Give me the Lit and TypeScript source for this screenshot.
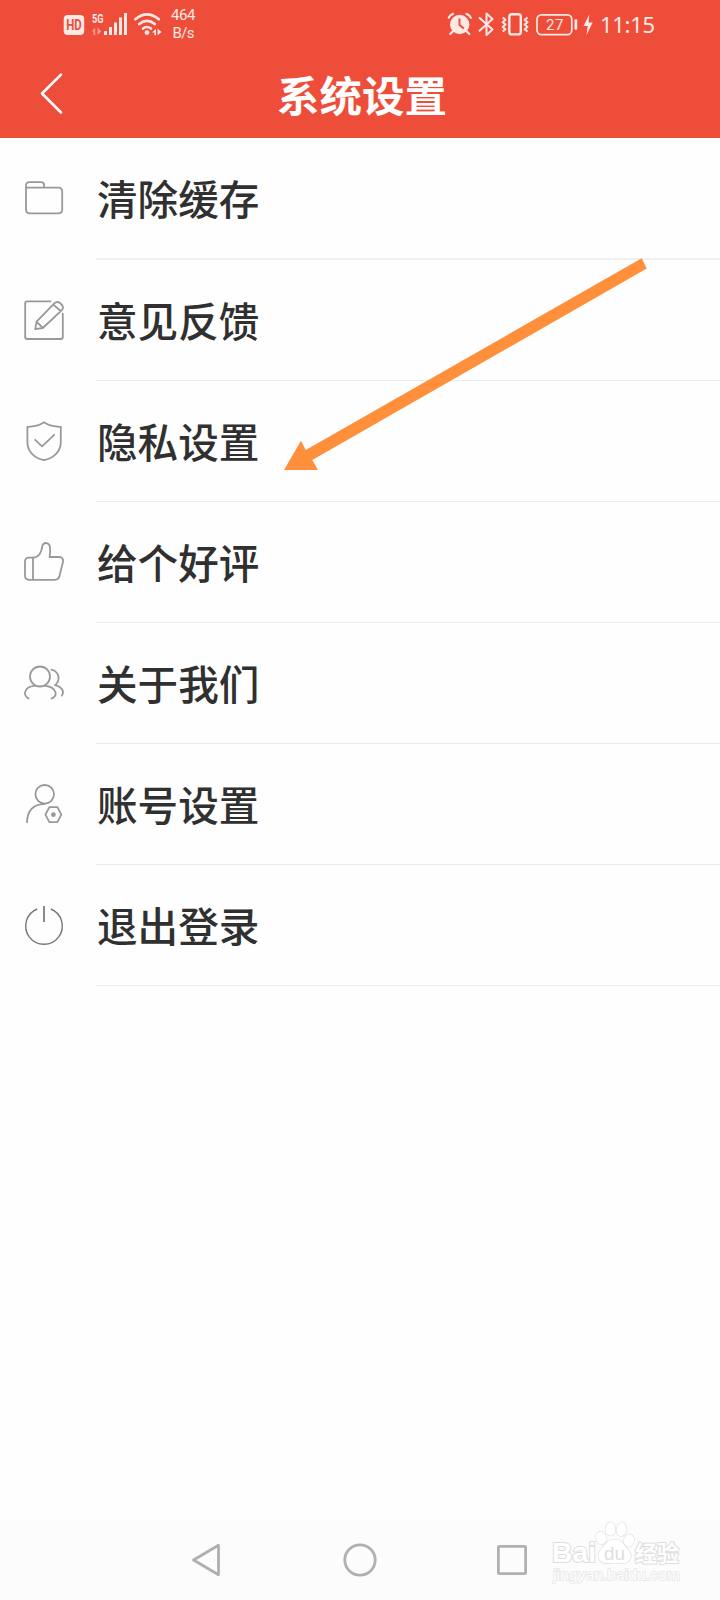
import { LitElement, html, svg, css } from "lit";
import { customElement, property } from "lit/decorators.js";

const icons: Record<string, unknown> = {
  folder: svg`<path d="M2 32V7.5Q2 4.2 5.2 4.2H17.3Q20 4.2 20 6.8V9.6M2 9.6H34.3Q38.2 9.6 38.2 13.5V31.6Q38.2 35.4 34.3 35.4H6Q2 35.4 2 31.5"/>`,
  edit: svg`<path d="M26.5 1.3H3Q1.2 1.3 1.2 3V37.3Q1.2 39 3 39H37Q38.8 39 38.8 37.3V13.7"/><path d="M11.2 29.2 12.6 21.6 30.3 3.4Q33 .8 36 3L38 5Q40 7.6 37.8 10.2L18.8 28 11.2 29.2M29.3 4.6 36.8 11M12.6 21.6 18.8 28"/>`,
  shield: svg`<path d="M20 1.3Q13 6 3.4 5.8V21C3.4 31 11 37.5 20 39.2C29 37.5 36.8 31 36.8 21V5.8Q27 6 20 1.3Z"/><path d="M11.2 18.8 18 25.3 30.2 13.8"/>`,
  thumb: svg`<path d="M9 15.6H5Q1 15.6 1 19.6V33.6Q1 37.8 5 37.8H31Q34.4 37.8 35.3 34.6L39 20Q39.6 15 35.3 15H25.6C26.3 11 26.6 8 25.9 4.5C25 .1 19.5-.2 18.3 4C17.5 10 15.5 15.6 9 15.6V37.8"/>`,
  users: svg`<circle cx="16" cy="13.5" r="10"/><path d="M4.6 35.6C1.5 33.5 .7 31.5 1 29.5C1.8 25.5 5.5 23.3 10.5 22.9M21.5 22.9C27 23.5 30.5 26 31.6 29.6C32 32 30.5 34.2 27.6 35.6M27.3 6.7C31.5 7.3 34.6 10.8 34.6 15C34.6 18 33.2 20.5 31 22.2C35.5 23.2 38.8 26 39 29.6Q39 31.2 37.8 32.6"/>`,
  account: svg`<circle cx="20.7" cy="10.3" r="9.3"/><path d="M3 38.3C3.3 27 9 20.2 20.7 19.8M25.4 23.1H33.4L37.3 30.7 33.4 38.2H25.4L21.4 30.7Z"/><circle cx="29.4" cy="30.7" r="2.4" fill="#999" stroke="none"/>`,
  power: svg`<g stroke="#777" stroke-width="1.4" stroke-linecap="butt"><path d="M13.2 4A18.3 18.3 0 1 0 26.8 4"/><path d="M20 1V17" stroke-width="1.7"/></g>`,
};

@customElement("status-bar")
class StatusBar extends LitElement {
  static styles = css`
    :host { display: flex; justify-content: space-between; height: 50px; padding: 0 60px 0 58px; }
    svg { display: block; flex: none; }
    text { font-family: Roboto, "Noto Sans", sans-serif; }
    .time { font-family: "Noto Sans", sans-serif; }
  `;
  render() {
    return html`
      <svg width="142" height="50" viewBox="58 0 142 50" fill="#ffe9e5">
        <rect x="63.7" y="15" width="20.5" height="20" rx="4" />
        <text x="66.3" y="30.2" font-size="14" font-weight="700" textLength="15.5" lengthAdjust="spacingAndGlyphs" fill="#ee4d3a">HD</text>
        <text x="92" y="22.7" font-size="13" font-weight="700" textLength="11.5" lengthAdjust="spacingAndGlyphs">5G</text>
        <path d="M104 31h3v4h-3zM109 27h3v8h-3zM114 22.5h3v12.5h-3zM119 17.5h3v17.5h-3zM124 13h3v22h-3z" />
        <path opacity=".5" d="M92 31.2l3.2-3.7v7.5h-1.7v-3.8zM97.5 27.5v7.5l3.8-3.8z" />
        <g fill="none" stroke="#ffe9e5" stroke-width="2.6" stroke-linecap="round">
          <path d="M135.3 19.2Q147 9.5 158.8 19.2M139.2 24.1Q147 17.8 154.8 24.1M143 28.6Q147 25.4 151 28.6" />
        </g>
        <circle cx="147" cy="32.6" r="2.4" />
        <path d="M152 32.5l4-3.8v6.6h-1.6v-2.8zM157.6 28.7v6.6l4-3.2z" />
        <text x="171" y="20" font-size="15" textLength="24.5">464</text>
        <text x="172.5" y="37.8" font-size="15" textLength="22">B/s</text>
      </svg>
      <svg width="220" height="50" viewBox="440 0 220 50" fill="#ffe9e5">
        <circle cx="459.7" cy="24.5" r="9.7" />
        <path d="M459.5 18.5v6.5l4.3 3.5" fill="none" stroke="#ee4d3a" stroke-width="2" />
        <path d="M448.7 17.7Q450 14.8 453 13.9M466.5 13.9Q469.5 14.8 470.8 17.7M452.7 31.5l-2.5 2.5M466.8 31.5l2.5 2.5" fill="none" stroke="#ffe9e5" stroke-width="2.2" stroke-linecap="round" />
        <g fill="none" stroke="#ffe9e5" stroke-width="2" stroke-linejoin="round">
          <path d="M479 17.5 492.5 29.5 486.5 35V13.5L492.5 19 479 31.2" />
          <rect x="509.3" y="14.2" width="11.5" height="20.2" rx="2.5" stroke-width="2.4" />
          <path d="M502.7 17.5l2.8 2.3-2.8 2.5 2.8 2.3-2.8 2.3 2.8 2.3-2.8 2.3M527.5 17.5l-2.8 2.3 2.8 2.5-2.8 2.3 2.8 2.3-2.8 2.3 2.8 2.3" />
          <rect x="537" y="14.8" width="34.8" height="19.8" rx="4.5" stroke-width="1.7" />
        </g>
        <rect x="574.5" y="19.3" width="2.7" height="10.5" rx="1" />
        <text x="546" y="30" font-size="15" textLength="17.5">27</text>
        <path d="M589.3 14.5 583.5 26h4.2l-1.2 9L592.7 22.6h-4.2z" />
        <text class="time" x="600" y="32.8" font-size="22" textLength="55">11:15</text>
      </svg>`;
  }
}

@customElement("setting-row")
class SettingRow extends LitElement {
  @property() icon = "";
  @property() label = "";
  static styles = css`
    :host { display: grid; grid-template-columns: 96px 1fr; height: 121px; }
    :host([first]) { height: 122px; }
    .glyph { height: 120px; padding-left: 24px; display: flex; align-items: center; }
    .icon { width: 40px; height: 40px; overflow: visible; }
    .label {
      display: flex; align-items: center; padding-left: 1px; border-bottom: 1px solid #ebebeb; color: #303030;
      font: 500 40.6px/1 "KaiTi", "Noto Sans CJK SC", sans-serif; white-space: nowrap;
    }
    :host([first]) .label { border-bottom: 2px solid #efefef; }
  `;
  render() {
    return html`
      <div class="glyph">
        <svg class="icon" viewBox="0 0 40 40" fill="none" stroke="#999" stroke-width="1.8" stroke-linecap="round" stroke-linejoin="round">${icons[this.icon]}</svg>
      </div>
      <div class="label">${this.label}</div>`;
  }
}

@customElement("app-root")
class AppRoot extends LitElement {
  static styles = css`
    :host { display: flex; flex-direction: column; position: relative; width: 720px; height: 1600px; background: #fefefe; overflow: hidden; }
    .top { height: 138px; background: #ee4d3a; display: flex; flex-direction: column; flex: none; }
    .title-bar { display: grid; grid-template-columns: 120px 1fr 116px; align-items: center; height: 88px; }
    .title { text-align: center; color: #fff; font: 600 42.5px/1 "KaiTi", "Noto Sans CJK SC", sans-serif; }
    .back { display: block; margin-left: 38px; }
    .list { flex: 1; }
    .nav { height: 80px; flex: none; background: #fcfcfc; display: flex; align-items: center; justify-content: space-between; padding: 0 190px; }
    .arrow { position: absolute; left: 280px; top: 250px; }
    .mark { position: absolute; left: 545px; top: 1515px; }
  `;
  render() {
    const rows = [
      ["folder", "清除缓存"],
      ["edit", "意见反馈"],
      ["shield", "隐私设置"],
      ["thumb", "给个好评"],
      ["users", "关于我们"],
      ["account", "账号设置"],
      ["power", "退出登录"],
    ];
    return html`
      <div class="top">
        <status-bar></status-bar>
        <div class="title-bar">
          <svg class="back" width="28" height="44" viewBox="0 0 28 44" fill="none" stroke="#fff" stroke-width="2.6" stroke-linecap="round" stroke-linejoin="round"><path d="M23 2.7 4 21.5 23 40.5" /></svg>
          <div class="title">系统设置</div>
        </div>
      </div>
      <div class="list">
        ${rows.map(([icon, label], i) => html`<setting-row icon=${icon} label=${label} ?first=${i === 0}></setting-row>`)}
      </div>
      <div class="nav">
        <svg width="34" height="34" viewBox="0 0 34 34" fill="none" stroke="#b0b0b0" stroke-width="2.8" stroke-linejoin="round"><path d="M3.5 17 28.5 2.2V31.8Z" /></svg>
        <svg width="34" height="34" viewBox="0 0 34 34" fill="none" stroke="#b0b0b0" stroke-width="2.8"><circle cx="17" cy="17" r="15.2" /></svg>
        <svg width="34" height="34" viewBox="0 0 34 34" fill="none" stroke="#b0b0b0" stroke-width="2.8"><rect x="2.4" y="3.4" width="27.2" height="27.2" rx="1.6" /></svg>
      </div>
      <svg class="arrow" width="370" height="224" viewBox="280 250 370 224"><path d="M284 470 301 440.7 305.7 450 641.7 258.3 646.7 268.5 312.3 460 318 470Z" fill="#ff8f3b" /></svg>
      <svg class="mark" width="145" height="75" viewBox="545 1515 145 75" fill="#fff" stroke="#dedede" stroke-width="1.2" paint-order="stroke" font-family="'Liberation Sans', sans-serif">
        <text x="552" y="1562" font-size="28" font-weight="700" stroke-width="2" textLength="44" lengthAdjust="spacingAndGlyphs">Bai</text>
        <ellipse cx="601" cy="1538" rx="5" ry="6.5" transform="rotate(-12 601 1538)" />
        <ellipse cx="610.5" cy="1529" rx="5" ry="6.7" />
        <ellipse cx="621.5" cy="1529.5" rx="5" ry="6.7" transform="rotate(10 621.5 1529.5)" />
        <ellipse cx="629" cy="1540.5" rx="5" ry="6.3" transform="rotate(14 629 1540.5)" />
        <path d="M614.5 1539.5C606 1539.5 605 1546 600.5 1550C596 1555 599 1563 606 1563.3C611 1563.5 618 1563.5 623 1563.3C631 1563 633 1555 628.5 1550C624 1546 623 1539.5 614.5 1539.5Z" />
        <text x="604" y="1559.5" font-size="19" textLength="21" fill="#dedede" stroke="none" lengthAdjust="spacingAndGlyphs">du</text>
        <text x="635" y="1560.5" font-size="22" font-weight="700" stroke-width="2" textLength="44" font-family="'Noto Sans CJK SC', sans-serif">经验</text>
        <text x="553" y="1579.5" font-size="14" textLength="127" lengthAdjust="spacingAndGlyphs" stroke-width="1.4" stroke="#e6e6e6" font-family="'Liberation Sans', sans-serif">jingyan.baidu.com</text>
      </svg>`;
  }
}
